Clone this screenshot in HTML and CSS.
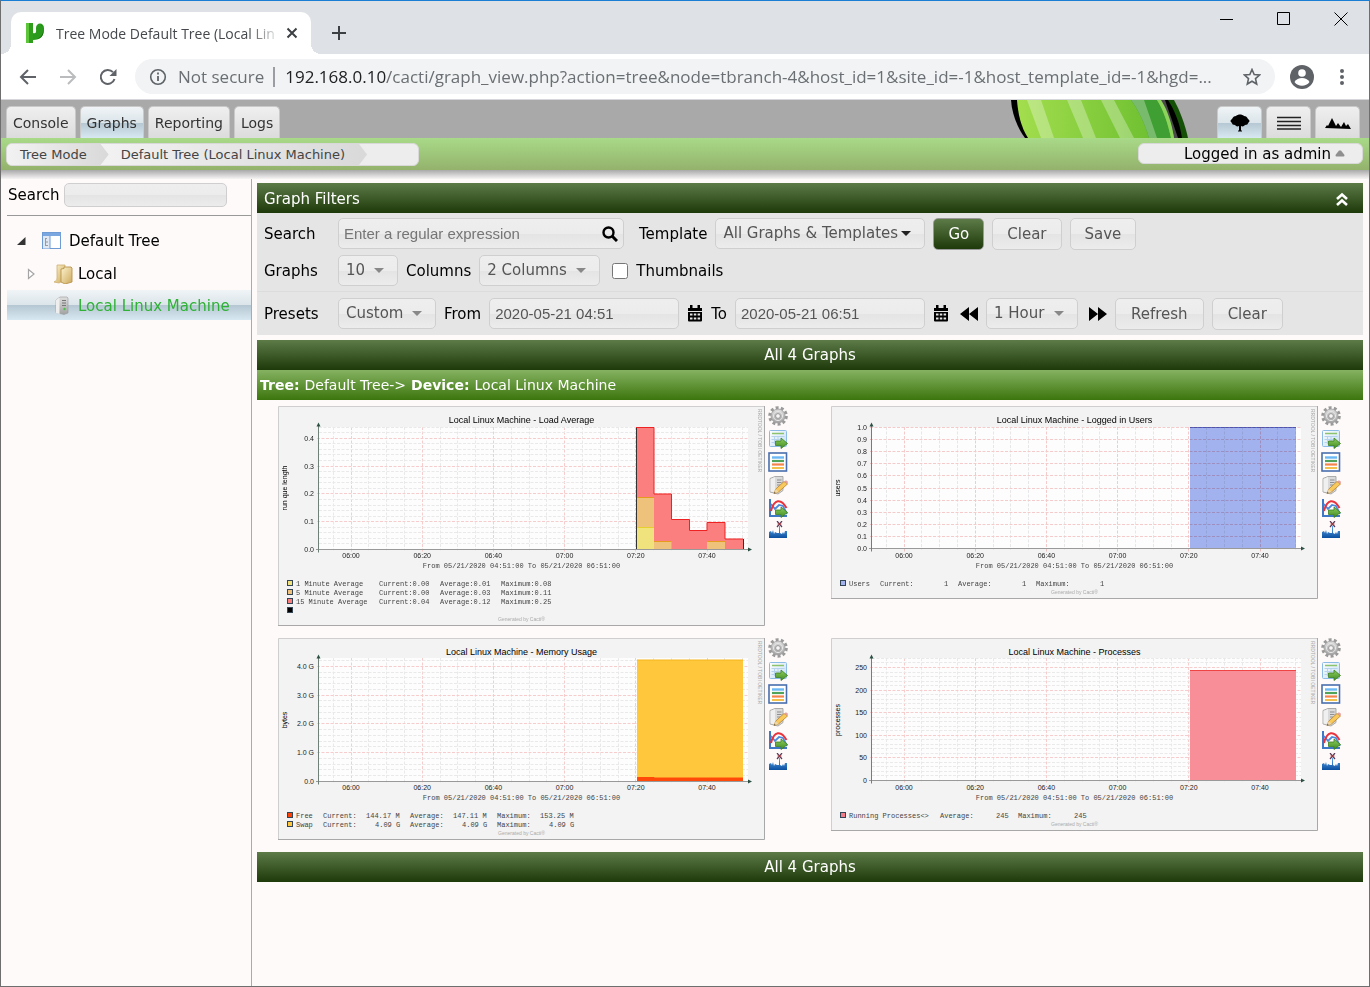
FILE: index.html
```html
<!DOCTYPE html>
<html lang="en">
<head>
  <meta charset="UTF-8" />
  <meta name="viewport" content="width=device-width, initial-scale=1" />
  <title>Tree Mode Default Tree (Local Linux Machine)</title>
  <link rel="stylesheet" href="styles.css">
</head>
<body>

  <!-- shared icons -->
  <svg class="defs" width="0" height="0" aria-hidden="true">
    <defs>
      <linearGradient id="metal" x1="0" y1="0" x2="0" y2="1">
        <stop offset="0" stop-color="#dedede"/><stop offset="1" stop-color="#a2a2a2"/>
      </linearGradient>
      <linearGradient id="leaf" x1="0" y1="0" x2="0" y2="1">
        <stop offset="0" stop-color="#8fcf5c"/><stop offset="1" stop-color="#3f8a24"/>
      </linearGradient>
      <linearGradient id="bluebar" x1="0" y1="0" x2="0" y2="1">
        <stop offset="0" stop-color="#5aa5e8"/><stop offset="1" stop-color="#0b4fa0"/>
      </linearGradient>
      <linearGradient id="cactusBody" x1="0" y1="0" x2="1" y2="0">
        <stop offset="0" stop-color="#a3de4e"/><stop offset="1" stop-color="#66bb2c"/>
      </linearGradient>
      <linearGradient id="folder" x1="0" y1="0" x2="1" y2="1">
        <stop offset="0" stop-color="#fdf3cf"/><stop offset="1" stop-color="#cda95b"/>
      </linearGradient>
      <linearGradient id="sheet" x1="0" y1="0" x2="1" y2="1">
        <stop offset="0" stop-color="#ffffff"/><stop offset="1" stop-color="#c3def5"/>
      </linearGradient>
    </defs>
    <symbol id="i-gear" viewBox="0 0 20 20">
      <circle cx="10" cy="10" r="8.200" fill="none" stroke="#9a9a9a" stroke-width="3.200" stroke-dasharray="2.900 2.252"/>
      <circle cx="10" cy="10" r="7" fill="url(#metal)" stroke="#9a9a9a" stroke-width=".8"/>
      <circle cx="10" cy="10" r="4.600" fill="none" stroke="#e6e6e6" stroke-width="1"/>
      <circle cx="10" cy="10" r="2.400" fill="#f7f5f5" stroke="#999" stroke-width="1"/>
    </symbol>
    <symbol id="i-csv" viewBox="0 0 20 20">
      <rect x="1.500" y="1.500" width="17" height="16" rx="1" fill="url(#sheet)" stroke="#8cbbe6"/>
      <path d="M4 4.500h12" stroke="#8cc36c" stroke-width="1.500"/>
      <path d="M3.500 7.500h13M3.500 10.500h10M3.500 13.500h5M6.500 7v8M10 7v8" stroke="#b5d3ec" stroke-width="1"/>
      <path d="M7.500 12h5.500V9l6.500 5.500-6.500 5v-3H7.500z" fill="url(#leaf)" stroke="#3a7d22" stroke-width=".8"/>
    </symbol>
    <symbol id="i-list" viewBox="0 0 20 20">
      <rect x="1" y="1" width="17.500" height="18" fill="#fff" stroke="#4a6fae" stroke-width="1.600"/>
      <path d="M4 5.500h12" stroke="#6cb8f5" stroke-width="2.400"/>
      <path d="M4 9h12" stroke="#52a35a" stroke-width="2.200"/>
      <path d="M4 12.500h12" stroke="#f5844c" stroke-width="2.200"/>
      <path d="M4 16h12" stroke="#f3c04b" stroke-width="2"/>
    </symbol>
    <symbol id="i-edit" viewBox="0 0 20 20">
      <path d="M2 3.500L7 1.500h8v14l-5 3.500-8-2z" fill="#dadada" stroke="#9b9b9b" stroke-width=".8"/>
      <path d="M2.500 4L7 2v15.500l-4.500-1z" fill="#f0f0f0"/>
      <path d="M9 5h4.500M9 7.500h4.500M9 10h3" stroke="#8e8e8e"/>
      <path d="M6 18.500l1.800-4.500L16 6.500l3.500 2.500-9 8z" fill="#f8c95c" stroke="#b9822b" stroke-width=".8"/>
      <path d="M16 6.500l3.500 2.500 .5-2.200-2-1.500z" fill="#e6a0a0"/>
      <path d="M6 18.500l1.800-4.500 2.700 3z" fill="#efd7ab"/>
      <path d="M6 18.500l.6-1.500 1 1z" fill="#333"/>
    </symbol>
    <symbol id="i-realtime" viewBox="0 0 20 20">
      <path d="M2 1v17h17" fill="none" stroke="#3f78c4" stroke-width="2"/>
      <path d="M3 6l4 5 4-4 4 1 4 8" fill="none" stroke="#4b8add" stroke-width="1.800"/>
      <path d="M3 13C6 1 13 0 18.500 10" fill="none" stroke="#e8323c" stroke-width="2"/>
      <path d="M7.500 12h5.500V9l6.500 5.500-6.500 5v-3H7.500z" fill="url(#leaf)" stroke="#3a7d22" stroke-width=".8"/>
    </symbol>
    <symbol id="i-spike" viewBox="0 0 20 20">
      <path d="M1 17v-6l2-1 1 2 1-3 1 4 1-2 2 1 2 0V5h1v7l2 1 1-2 1 2 1-3 2 0v7z" fill="url(#bluebar)"/>
      <path d="M9 0l5 6M14 0L9 6" stroke="#5b3a55" stroke-width="1.200"/>
      <path d="M9.500 3h4" stroke="#c23b3b"/>
    </symbol>
    <symbol id="i-calendar" viewBox="0 0 16 17">
      <path d="M1 3h14v3H1zM3 0h2.500v4H3zM10.500 0H13v4h-2.500z"/>
      <path d="M1 7v8.500q0 1 1 1h12q1 0 1-1V7zM3 8.500h2.500v2H3zM6.800 8.500h2.500v2H6.800zM10.600 8.500h2.500v2h-2.500zM3 12.500h2.500v2H3zM6.800 12.500h2.500v2H6.800zM10.600 12.500h2.500v2h-2.500z" fill-rule="evenodd"/>
    </symbol>
  </svg>

  <div class="window">

    <div class="tabstrip">
      <div class="browser-tab">
        <svg class="favicon" width="20" height="22" viewBox="0 0 20 22">
          <path d="M1 1h7v20H1z" fill="#2f9e1c"/>
          <path d="M1 1h3v20H1z" fill="#5cc53a"/>
          <path d="M8 11c4 1 3-2 3-5 0-6 8-6 8 0 0 8-3 12-11 12z" fill="#2a9a1c"/>
          <path d="M16 3c3 1 4 11-4 14 8-1 8-11 4-14z" fill="#14680c"/>
        </svg>
        <span class="browser-tab-title">Tree Mode Default Tree (Local Lin</span>
        <button class="chrome-btn" aria-label="Close tab">
          <svg width="12" height="12" viewBox="0 0 12 12"><path d="M1.500 1.500l9 9M10.500 1.500l-9 9" stroke="#3c4043" stroke-width="2"/></svg>
        </button>
      </div>
      <button class="chrome-btn new-tab" aria-label="New tab">
        <svg width="16" height="16" viewBox="0 0 16 16"><path d="M8 1v14M1 8h14" stroke="#3c4043" stroke-width="2"/></svg>
      </button>
      <div class="window-controls">
        <button class="chrome-btn" aria-label="Minimize"><svg width="14" height="14"><path d="M0 7.500h13" stroke="#000"/></svg></button>
        <button class="chrome-btn" aria-label="Maximize"><svg width="14" height="14"><path d="M.5 .5h12v12H.5z" fill="none" stroke="#000"/></svg></button>
        <button class="chrome-btn" aria-label="Close"><svg width="14" height="14"><path d="M.5 .5l13 13M13.500 .5l-13 13" stroke="#000"/></svg></button>
      </div>
    </div>

    <div class="toolbar">
      <button class="chrome-btn" aria-label="Back"><svg width="18" height="16" viewBox="0 0 18 16"><path d="M17 8H2M9 1L2 8l7 7" fill="none" stroke="#5f6368" stroke-width="2"/></svg></button>
      <button class="chrome-btn" aria-label="Forward"><svg width="18" height="16" viewBox="0 0 18 16"><path d="M1 8h15M9 1l7 7-7 7" fill="none" stroke="#babcbe" stroke-width="2"/></svg></button>
      <button class="chrome-btn" aria-label="Reload"><svg width="18" height="18" viewBox="0 0 18 18"><path d="M15.500 11A7 7 0 1 1 14 4.200" fill="none" stroke="#5f6368" stroke-width="2"/><path d="M17.500 1v7h-7z" fill="#5f6368"/></svg></button>
      <div class="address">
        <svg width="18" height="18" viewBox="0 0 18 18"><circle cx="9" cy="9" r="7.300" fill="none" stroke="#5f6368" stroke-width="1.600"/><path d="M9 8v5M9 4.500v2" stroke="#5f6368" stroke-width="1.800"/></svg>
        <span class="address-note">Not secure</span>
        <span class="address-url"><b>192.168.0.10</b>/cacti/graph_view.php?action=tree&amp;node=tbranch-4&amp;host_id=1&amp;site_id=-1&amp;host_template_id=-1&amp;hgd=...</span>
        <button class="chrome-btn" aria-label="Bookmark"><svg width="18" height="18" viewBox="0 0 18 18"><path d="M9 1.500l2.200 5 5.300.5-4 3.600 1.200 5.400L9 13.200 4.300 16l1.200-5.400-4-3.600 5.300-.5z" fill="none" stroke="#5f6368" stroke-width="1.600"/></svg></button>
      </div>
      <button class="chrome-btn profile" aria-label="Profile"><svg width="24" height="24" viewBox="0 0 24 24"><circle cx="12" cy="12" r="12" fill="#5f6368"/><circle cx="12" cy="8" r="3.800" fill="#fff"/><path d="M4.500 17c3-5.500 12-5.500 15 0-3.500 5-11.500 5-15 0z" fill="#fff"/></svg></button>
      <button class="chrome-btn" aria-label="Menu"><svg width="4" height="18" viewBox="0 0 4 18"><circle cx="2" cy="3" r="2" fill="#5f6368"/><circle cx="2" cy="9" r="2" fill="#5f6368"/><circle cx="2" cy="15" r="2" fill="#5f6368"/></svg></button>
    </div>

    <header class="header">
      <nav class="tabs">
        <a class="tab" href="#">Console</a>
        <a class="tab selected" href="#">Graphs</a>
        <a class="tab" href="#">Reporting</a>
        <a class="tab" href="#">Logs</a>
      </nav>
      <svg class="cactus" width="178" height="38" viewBox="0 0 178 38">
        <path d="M155 0h9c6 11 11 24 14 38h-14z" fill="#155007"/>
        <path d="M1 0h157c7 11 12 24 14 38H15C7 27 2 14 1 0z" fill="#000"/>
        <path d="M150 0h5l13 38h-6z" fill="#4a4a4a"/>
        <path d="M7 0h142c8 11 12 24 15 38H18C11 27 8 14 7 0z" fill="url(#cactusBody)"/>
        <path d="M17 0h14l13 38H31zM57 0h14l15 38H73zM91 0h13l20 38h-14z" fill="#fff" opacity=".3"/>
        <path d="M121 0h26c7 11 11 24 14 38h-22c-4-14-10-27-18-38z" fill="#3f9f33"/>
        <path d="M121 0h13l13 38h-8c-4-14-10-27-18-38z" fill="#79bb6c"/>
        <path d="M147 0h4c7 11 11 24 13 38h-3c-3-14-7-27-14-38z" fill="#8cd45c"/>
      </svg>
      <nav class="tabs">
        <a class="tab tab-icon selected" href="#" aria-label="Tree view">
          <svg width="20" height="20" viewBox="0 0 20 20"><path d="M9 18v-5c-2 1-3 0-4-1-2 0-3-1-3-2-2-1-2-3 0-4 1-2 2-3 4-3 2-2 6-2 8 0 2 0 3 1 4 3 2 1 2 3 0 4 0 1-1 2-3 2-1 1-2 2-4 1v5z"/><path d="M8 18h4" stroke="#000"/></svg>
        </a>
        <a class="tab tab-icon" href="#" aria-label="List view">
          <svg width="24" height="14" viewBox="0 0 24 14"><path d="M0 1.500h24M0 5.500h24M0 9.500h24M0 13h24" stroke="#222" stroke-width="1.500"/></svg>
        </a>
        <a class="tab tab-icon" href="#" aria-label="Preview">
          <svg width="26" height="12" viewBox="0 0 26 12"><path d="M0 11l2-3 1 1 4-8 4 8 2-3 3 4 3-5 2 4 2-2 3 5z"/></svg>
        </a>
      </nav>
    </header>

    <div class="crumbbar">
      <ul class="crumbs">
        <li><a href="#">Tree Mode</a></li>
        <li><a href="#">Default Tree (Local Linux Machine)</a></li>
      </ul>
      <button class="user">Logged in as admin <svg width="10" height="7" viewBox="0 0 10 7"><path d="M4 .5h2L9.500 5q0 1.500-1 1.500h-7Q.5 6.500.5 5z" fill="#8f8f8f"/></svg></button>
    </div>

    <div class="page">
      <aside class="sidebar">
        <form class="tree-search">
          <label for="treeSearch">Search</label>
          <input class="field" type="text" id="treeSearch">
        </form>
        <ul class="tree">
          <li class="tree-row">
            <svg class="twisty" width="9" height="9" viewBox="0 0 9 9"><path d="M8.500 0v8H0z" fill="#333"/></svg>
            <svg width="20" height="18" viewBox="0 0 20 18"><rect x=".5" y=".5" width="18" height="16" fill="#fff" stroke="#6f9bd4"/><path d="M1 1h17.500v3H1z" fill="#7ba7e0"/><path d="M1 4h7v12.500H1z" fill="#dfe8f4"/><path d="M8 4v12.500" stroke="#6f9bd4"/><path d="M3.500 6v8M3 6.500h2M4 10h2M3 13.500h3" stroke="#9a9a9a"/></svg>
            <a href="#">Default Tree</a>
          </li>
          <li class="tree-row child">
            <svg class="twisty" width="8" height="12" viewBox="0 0 8 12"><path d="M1 1.500v9L6.500 6z" fill="#fff" stroke="#a5a5a5" stroke-width="1.200"/></svg>
            <svg width="20" height="20" viewBox="0 0 20 20"><path d="M4 1h8v15l-6 3-5-1c2-1 3-2 3-4z" fill="url(#folder)" stroke="#cdb071" stroke-width=".8"/><path d="M8 5l3-.5V3h7l1 1v14l-7 2-4-2z" fill="url(#folder)" stroke="#b8934a" stroke-width=".9"/></svg>
            <a href="#">Local</a>
          </li>
          <li class="tree-row child selected">
            <span class="twisty"></span>
            <svg width="20" height="20" viewBox="0 0 20 20"><path d="M3 4l4-3h7l1 1v15l-4 1.500-8-2z" fill="url(#metal)" stroke="#999" stroke-width=".6"/><path d="M3 4l3.500-2.500V18L3 17z" fill="#eee"/><path d="M9 4.500h4M9 7h4M9 9.500h4" stroke="#777"/><circle cx="11.500" cy="13" r="1.200" fill="#4fc04f"/></svg>
            <a href="#">Local Linux Machine</a>
          </li>
        </ul>
      </aside>

      <main class="content">
        <section class="filters">
          <h2 class="bar bar-left">
            Graph Filters
            <svg width="14" height="16" viewBox="0 0 14 16"><path d="M2 8l5-4.500L12 8M2 14l5-4.500 5 4.500" fill="none" stroke="#fff" stroke-width="2.600"/></svg>
          </h2>
          <form class="filter-body">
            <div class="filter-row">
              <label class="filter-name" for="rfilter">Search</label>
              <div class="search-box">
                <input class="field" type="text" id="rfilter" placeholder="Enter a regular expression">
                <svg class="search-icon" width="16" height="16" viewBox="0 0 16 16"><circle cx="6.500" cy="6.500" r="5" fill="none" stroke="#000" stroke-width="2.400"/><path d="M10 10l5 5" stroke="#000" stroke-width="3"/></svg>
              </div>
              <label class="gap-left" for="template">Template</label>
              <span class="select dark"><select class="field w-template" id="template"><option>All Graphs &amp; Templates</option></select></span>
              <button class="btn btn-go" type="button">Go</button>
              <button class="btn" type="button">Clear</button>
              <button class="btn" type="button">Save</button>
            </div>
            <div class="filter-row">
              <label class="filter-name" for="graphs">Graphs</label>
              <span class="select"><select class="field w-count" id="graphs"><option>10</option></select></span>
              <label for="columns">Columns</label>
              <span class="select"><select class="field w-columns" id="columns"><option>2 Columns</option></select></span>
              <input class="check" type="checkbox" id="thumbnails">
              <label for="thumbnails">Thumbnails</label>
            </div>
            <div class="filter-row timespan">
              <label class="filter-name" for="presets">Presets</label>
              <span class="select"><select class="field w-preset" id="presets"><option>Custom</option></select></span>
              <label for="date1">From</label>
              <input class="field w-date" type="text" id="date1" value="2020-05-21 04:51">
              <button class="icon-btn" type="button" aria-label="Start date"><svg width="16" height="17"><use href="#i-calendar"/></svg></button>
              <label for="date2">To</label>
              <input class="field w-date" type="text" id="date2" value="2020-05-21 06:51">
              <button class="icon-btn" type="button" aria-label="End date"><svg width="16" height="17"><use href="#i-calendar"/></svg></button>
              <button class="icon-btn shift-left" type="button" aria-label="Shift back"><svg width="18" height="14" viewBox="0 0 18 14"><path d="M9 0v14L0 7zM18 0v14L9 7z"/></svg></button>
              <span class="select"><select class="field w-shift" aria-label="Time shift"><option>1 Hour</option></select></span>
              <button class="icon-btn shift-right" type="button" aria-label="Shift forward"><svg width="18" height="14" viewBox="0 0 18 14"><path d="M0 0v14l9-7zM9 0v14l9-7z"/></svg></button>
              <button class="btn" type="button">Refresh</button>
              <button class="btn" type="button">Clear</button>
            </div>
          </form>
        </section>

        <div class="bar">All 4 Graphs</div>
        <div class="bar bar-sub"><b>Tree:</b> Default Tree-&gt; <b>Device:</b> Local Linux Machine</div>
        <div class="graphs" id="graphList"></div>
        <div class="bar">All 4 Graphs</div>
      </main>
    </div>
  </div>

  <script src="graphs.js"></script>
</body>
</html>
```

FILE: styles.css
```css
* {
  box-sizing: border-box;
}
body {
  margin: 0;
  font-family: Verdana, "DejaVu Sans", sans-serif;
  font-size: 15px;
  color: #000;
  background: #fffafa;
}
a {
  color: inherit;
  text-decoration: none;
}
ul {
  list-style: none;
  margin: 0;
  padding: 0;
}
button {
  font: inherit;
  cursor: pointer;
}
svg {
  display: block;
  flex: none;
}
.defs {
  position: absolute;
}
.window {
  display: flex;
  flex-direction: column;
  min-height: 100vh;
  border: 1px solid #6e6e6e;
  border-top-color: #1a7fd4;
}

/* browser frame */
.chrome-btn,
.icon-btn {
  display: flex;
  padding: 0;
  border: 0;
  background: none;
}
.tabstrip {
  display: flex;
  align-items: center;
  height: 53px;
  padding: 11px 21px 0 10px;
  background: #dee1e6;
  font-family: "Segoe UI", "Open Sans", sans-serif;
}
.browser-tab {
  position: relative;
  display: flex;
  align-items: center;
  gap: 11px;
  width: 300px;
  height: 42px;
  padding: 0 14px;
  border-radius: 10px 10px 0 0;
  background: #fff;
}
.browser-tab::before,
.browser-tab::after {
  content: "";
  position: absolute;
  bottom: 0;
  width: 10px;
  height: 10px;
}
.browser-tab::before {
  left: -10px;
  background: radial-gradient(circle at 0 0, transparent 10px, #fff 10px);
}
.browser-tab::after {
  right: -10px;
  background: radial-gradient(circle at 100% 0, transparent 10px, #fff 10px);
}
.browser-tab-title {
  flex: 1;
  white-space: nowrap;
  font-size: 14px;
  color: #45494d;
  -webkit-mask-image: linear-gradient(to right, #000 88%, rgba(0,0,0,0.2));
  mask-image: linear-gradient(to right, #000 88%, rgba(0,0,0,0.2));
}
.new-tab {
  margin-left: 20px;
}
.window-controls {
  display: flex;
  gap: 43px;
  align-self: flex-start;
  margin-left: auto;
}
.toolbar {
  display: flex;
  align-items: center;
  gap: 22px;
  height: 46px;
  padding: 0 25px 0 18px;
  border-bottom: 1px solid #d5d7da;
  background: #fff;
  font-family: "Segoe UI", "Open Sans", sans-serif;
}
.address {
  display: flex;
  flex: 1;
  align-items: center;
  min-width: 0;
  height: 35px;
  margin-right: -7px;
  margin-left: -4px;
  padding: 0 14px;
  border-radius: 18px;
  background: #f1f3f4;
  font-size: 17px;
  color: #6b6f73;
}
.address-note {
  margin: 0 10px 0 11px;
  padding-right: 9px;
  border-right: 2px solid #9a9da1;
  line-height: 20px;
  white-space: nowrap;
}
.address-url {
  flex: 1;
  overflow: hidden;
  white-space: nowrap;
}
.address-url b {
  font-weight: normal;
  color: #202124;
}
.profile {
  margin-right: 4px;
}

/* cacti header */
.header {
  display: flex;
  align-items: flex-end;
  height: 38px;
  padding: 0 9px 0 5px;
  background: #a9a9a9;
}
.tabs {
  display: flex;
  gap: 4px;
}
.tab {
  display: flex;
  align-items: center;
  height: 32px;
  padding: 0 6px;
  border: 1px solid #c9c9c9;
  border-bottom: 0;
  border-radius: 5px 5px 0 0;
  background: linear-gradient(#efefef, #dcdcdc);
  font-size: 14px;
  color: #333;
}
.tab.selected {
  background: linear-gradient(#f0f4f7, #dbe5ea 50%, #b5c7d2 51%, #d8e8f2);
}
.tab-icon {
  justify-content: center;
  width: 45px;
}
.cactus {
  margin-right: 29px;
  margin-left: auto;
}
.crumbbar {
  display: flex;
  align-items: flex-start;
  justify-content: space-between;
  height: 41px;
  padding: 5px 6px 0 5px;
  background: linear-gradient(#a8da88, #94b26c 32px, #a9a9a9 32px, #f7f4f4);
}
.crumbs {
  display: flex;
  width: 413px;
  height: 23px;
  overflow: hidden;
  border: 1px solid #d8d8d8;
  border-radius: 6px;
  background: #ededed;
  font-size: 13px;
  line-height: 21px;
  color: #444;
}
.crumbs li {
  padding: 0 22px 0 13px;
  background: linear-gradient(to right, #f2f2f2, #d9d9d9);
  clip-path: polygon(0 0, calc(100% - 8px) 0, 100% 50%, calc(100% - 8px) 100%, 0 100%);
  white-space: nowrap;
}
.crumbs li:first-child {
  position: relative;
  z-index: 1;
}
.crumbs li + li {
  margin-left: -8px;
  padding-left: 20px;
}
.user {
  display: flex;
  align-items: center;
  justify-content: flex-end;
  gap: 4px;
  width: 225px;
  height: 21px;
  padding: 0 17px 0 0;
  border: 1px solid #d8d8d8;
  border-radius: 6px;
  background: #ededed;
  color: #000;
}

/* page body */
.page {
  display: flex;
  flex: 1;
}
.sidebar {
  width: 251px;
  padding-left: 6px;
  border-right: 1px solid #aaa;
}
.tree-search {
  display: flex;
  align-items: center;
  gap: 4px;
  height: 37px;
  padding: 0 0 5px 1px;
  border-bottom: 1px solid #999;
}
.tree-search .field {
  width: 163px;
  height: 24px;
}
.tree {
  display: flex;
  flex-direction: column;
  gap: 2px;
  padding-top: 10px;
}
.tree-row {
  display: flex;
  align-items: center;
  height: 30px;
  padding-left: 10px;
}
.tree-row.child {
  padding-top: 2px;
  padding-left: 20px;
}
.twisty {
  width: 9px;
  margin-right: 16px;
}
.tree-row a {
  margin-left: 7px;
}
.child .twisty {
  margin-right: 17px;
}
.child a {
  margin-left: 5px;
}
.tree-row.selected {
  background: linear-gradient(#f0f4f7, #dbe5ea 50%, #b5c7d2 51%, #d8e8f2);
  color: #2eb135;
}
.content {
  flex: 1;
  min-width: 0;
  padding: 4px 6px 0 5px;
}
.bar {
  display: flex;
  align-items: center;
  justify-content: center;
  height: 30px;
  margin: 0;
  background: linear-gradient(#5c7b47, #1e390a);
  font-size: 15px;
  font-weight: normal;
  color: #fff;
}
.bar-left {
  justify-content: space-between;
  padding: 2px 14px 0 7px;
}
.bar-sub {
  justify-content: flex-start;
  gap: 5px;
  padding-left: 3px;
  background: linear-gradient(#85b262, #3c750d);
  font-size: 14px;
}

/* filters */
.filters {
  margin-bottom: 5px;
}
.filter-body {
  background: #e5e5e5;
}
.filter-row {
  display: flex;
  align-items: center;
  gap: 8px;
  height: 33px;
  padding-left: 7px;
}
.timespan {
  height: 44px;
  margin-top: 4px;
  border-top: 1px solid #dcdcdc;
}
.filter-row:first-child {
  height: 41px;
}
.filter-name {
  width: 66px;
}
.field {
  height: 31px;
  padding: 0 5px;
  border: 1px solid #cfcfcf;
  border-radius: 5px;
  background: linear-gradient(#eee, #ececec 50%, #e4e4e4 51%, #ececec);
  font-family: Arial, "Liberation Sans", sans-serif;
  font-size: 15px;
  color: #555;
}
.field::placeholder {
  color: #757575;
}
.search-box {
  position: relative;
}
.search-box .field {
  display: block;
  width: 286px;
}
.search-icon {
  position: absolute;
  top: 8px;
  right: 6px;
}
.gap-left {
  margin-left: 7px;
}
.select {
  position: relative;
  color: #888;
}
.select.dark {
  color: #222;
}
.select::after {
  content: "";
  position: absolute;
  top: 13px;
  right: 14px;
  border: 5px solid transparent;
  border-top-color: currentColor;
  border-bottom: 0;
  pointer-events: none;
}
select.field {
  display: block;
  appearance: none;
  padding: 0 7px 2px;
  font-family: inherit;
}
.w-template { width: 210px; }
.w-count { width: 60px; }
.w-columns { width: 121px; }
.w-preset { width: 98px; }
.w-date { width: 190px; }
.w-shift { width: 92px; }
.check {
  width: 16px;
  height: 16px;
  margin: 0 0 0 4px;
}
.btn {
  height: 32px;
  padding: 0 15px;
  border: 1px solid #cfcfcf;
  border-radius: 5px;
  background: linear-gradient(#eee, #ececec 50%, #e4e4e4 51%, #ececec);
  color: #555;
}
.filter-row:first-child .btn {
  padding: 0 14px;
}
.filter-row .btn-go {
  border-color: #999;
  background: linear-gradient(#5c7b47, #1e390a);
  color: #fff;
}
.shift-left {
  margin-left: 3px;
}
.shift-right {
  margin-left: 3px;
}

/* graphs */
.graphs {
  display: grid;
  grid-template-columns: 1fr 1fr;
  margin-bottom: 6px;
}
.graph {
  display: flex;
  justify-content: center;
  align-items: flex-start;
  gap: 3px;
  padding: 6px 2px 6px 0;
}
.graph-tools {
  display: flex;
  flex-direction: column;
  gap: 3px;
}
.chart {
  font-family: Arial, "Liberation Sans", sans-serif;
  font-size: 7px;
}
.chart-title {
  font-size: 9px;
}
.chart-mono {
  font-family: "Courier New", "Liberation Mono", monospace;
  fill: #444;
  white-space: pre;
}
.chart-faint {
  font-size: 5px;
  fill: #aaa;
}
.grid-over {
  mix-blend-mode: multiply;
}
```

FILE: graphs.js
```js
const W = 487, LEFT = 41, RIGHT = 470;
const TICKS = ["06:00", "06:20", "06:40", "07:00", "07:20", "07:40"];
const TICK0 = 73, TICK_STEP = 71.2;

// y values are pixels inside the chart, steps are [left, right, top]
const graphs = [
  {
    title: "Local Linux Machine - Load Average", unit: "run que length", height: 220,
    top: 21, base: 143.5, step: 27.8, minor: 5, labels: ["0.0", "0.1", "0.2", "0.3", "0.4"],
    start: "#333",
    areas: [
      { fill: "#fb7f7f", line: "#ee2222", steps: [[358, 376, 21.5], [376, 393.5, 88], [393.5, 411.5, 113.5], [411.5, 429, 124.5], [429, 447, 116.5], [447, 465, 133]] },
      { fill: "#efc27b", line: "#e69b1f", steps: [[358, 376, 91.5]] },
      { fill: "#efc27b", line: "#e69b1f", steps: [[376, 393.5, 135.5]] },
      { fill: "#efc27b", line: "#e69b1f", steps: [[429, 447, 135.5]] },
      { fill: "#f0e27c", line: "#e6cf2f", steps: [[358, 376, 121.5]] }
    ],
    legend: [
      ["#f0e27c", [18, "1 Minute Average"], [101, "Current:0.00"], [162, "Average:0.01"], [223, "Maximum:0.08"]],
      ["#efc27b", [18, "5 Minute Average"], [101, "Current:0.00"], [162, "Average:0.03"], [223, "Maximum:0.11"]],
      ["#fb7f7f", [18, "15 Minute Average"], [101, "Current:0.04"], [162, "Average:0.12"], [223, "Maximum:0.25"]],
      ["#000"]
    ]
  },
  {
    title: "Local Linux Machine - Logged in Users", unit: "users", height: 193,
    top: 21, base: 142.5, step: 12.1, minor: 1, gridOver: true,
    labels: ["0.0", "0.1", "0.2", "0.3", "0.4", "0.5", "0.6", "0.7", "0.8", "0.9", "1.0"],
    areas: [{ fill: "#a2b2ee", line: "#5566cc", steps: [[359, 465, 21.5]] }],
    legend: [["#a2b2ee", [18, "Users"], [49, "Current:"], [113, "1"], [127, "Average:"], [191, "1"], [205, "Maximum:"], [269, "1"]]]
  },
  {
    title: "Local Linux Machine - Memory Usage", unit: "bytes", height: 202,
    top: 20, base: 143.5, step: 28.8, minor: 5, labels: ["0.0", "1.0 G", "2.0 G", "3.0 G", "4.0 G"],
    areas: [
      { fill: "#ffc73b", line: "#f5b51c", steps: [[359, 465, 22]] },
      { fill: "#ff4a0a", line: "#ff4a0a", steps: [[359, 376, 139.5], [376, 465, 140]] }
    ],
    legend: [
      ["#ff4105", [18, "Free"], [45, "Current:"], [88, "144.17 M"], [132, "Average:"], [175, "147.11 M"], [219, "Maximum:"], [262, "153.25 M"]],
      ["#ffc73b", [18, "Swap"], [45, "Current:"], [97, "4.09 G"], [132, "Average:"], [184, "4.09 G"], [219, "Maximum:"], [271, "4.09 G"]]
    ]
  },
  {
    title: "Local Linux Machine - Processes", unit: "processes", height: 193,
    top: 20, base: 142.5, step: 22.6, minor: 5, labels: ["0", "50", "100", "150", "200", "250"],
    areas: [{ fill: "#f88e98", line: "#ee4444", steps: [[359, 465, 32.5]] }],
    legend: [["#f07c88", [18, "Running Processes<>"], [109, "Average:"], [165, "245"], [187, "Maximum:"], [243, "245"]]]
  }
];

const tools = [
  ["gear", "Graph details"], ["csv", "Export CSV"], ["list", "Time graph view"],
  ["edit", "Edit device"], ["realtime", "Realtime"], ["spike", "Kill spikes"]
];

function escapeText(s) {
  return s.replace(/</g, "&lt;").replace(/>/g, "&gt;");
}

function line(x1, y1, x2, y2, color, dash) {
  return `<line x1="${x1}" y1="${y1}" x2="${x2}" y2="${y2}" stroke="${color}"${dash ? ' stroke-dasharray="3 1.5"' : ""}/>`;
}

function drawGrid(g) {
  let out = "";
  for (let i = -2; i < 23; i++) {
    const x = Math.floor(TICK0 + i * TICK_STEP / 4) + 0.5;
    if (x < LEFT || x > RIGHT) continue;
    out += line(x, g.top, x, g.base + (i % 4 ? 1 : 3), i % 4 ? "#e9e9e9" : "#f7cccc", true);
  }
  for (let i = 1; g.base - i * g.step / g.minor >= g.top; i++) {
    const y = Math.floor(g.base - i * g.step / g.minor) + 0.5;
    out += line(LEFT - (i % g.minor ? 0 : 2), y, RIGHT, y, i % g.minor ? "#e9e9e9" : "#f7cccc", true);
  }
  return out;
}

function drawAreas(g) {
  return g.areas.map(a => {
    const first = a.steps[0], last = a.steps[a.steps.length - 1];
    const top = a.steps.map(([l, r, y]) => `L${l} ${y}L${r} ${y}`).join("").slice(1);
    return `<path d="M${first[0]} ${g.base}L${top}L${last[1]} ${g.base}z" fill="${a.fill}"/>` +
      `<path d="M${top}" fill="none" stroke="${a.line}"/>`;
  }).join("");
}

function drawLegend(g) {
  return g.legend.map(([color, ...parts], i) => {
    const y = 180 + i * 9;
    return `<rect x="9.5" y="${y - 5.5}" width="5" height="5" fill="${color}" stroke="#345"/>` +
      parts.map(([x, t]) => `<text class="chart-mono" x="${x}" y="${y}">${escapeText(t)}</text>`).join("");
  }).join("");
}

function drawChart(g) {
  const h = g.height;
  let out = `<svg class="chart" width="${W}" height="${h}" viewBox="0 0 ${W} ${h}" role="img" aria-label="${g.title}">`;
  out += `<rect width="${W}" height="${h}" fill="#f3f3f3"/>`;
  out += `<path d="M.5 ${h}V.5H${W}" fill="none" stroke="#cfcfcf"/><path d="M0 ${h - 0.5}H${W - 0.5}V0" fill="none" stroke="#a8a8a8"/>`;
  out += `<rect x="${LEFT}" y="${g.top}" width="${RIGHT - LEFT}" height="${g.base - g.top}" fill="#fdfdfd"/>`;
  out += g.gridOver
    ? drawAreas(g) + `<g class="grid-over">${drawGrid(g)}</g>`
    : drawGrid(g) + drawAreas(g);
  if (g.start) out += line(358.5, 22, 358.5, g.base, g.start) + line(465.5, 133, 465.5, g.base, g.start);
  out += line(LEFT - 3, g.base, RIGHT + 2, g.base, "#999") + line(40.5, 18, 40.5, g.base + 3, "#6f8078");
  out += `<path d="M38.500 20.500l2-4 2 4zM470 ${g.base - 2}l4 2-4 2z" fill="#2b5042"/>`;
  out += g.labels.map((t, i) =>
    `<text x="36" y="${g.base - i * g.step + 2.5}" text-anchor="end" fill="#222">${t}</text>`).join("");
  out += TICKS.map((t, i) => `<text x="${TICK0 + i * TICK_STEP}" y="152" text-anchor="middle" fill="#222">${t}</text>`).join("");
  out += `<text class="chart-title" x="${W / 2}" y="17" text-anchor="middle">${g.title}</text>`;
  out += `<text transform="translate(9 82) rotate(-90)" text-anchor="middle">${g.unit}</text>`;
  out += `<text class="chart-mono" x="${W / 2}" y="162" text-anchor="middle">From 05/21/2020 04:51:00 To 05/21/2020 06:51:00</text>`;
  out += drawLegend(g);
  out += `<text class="chart-faint" x="${W / 2}" y="${h - 5}" text-anchor="middle">Generated by Cacti®</text>`;
  out += `<text class="chart-faint" transform="translate(480 3) rotate(90)">RRDTOOL / TOBI OETIKER</text>`;
  return out + "</svg>";
}

document.getElementById("graphList").innerHTML = graphs.map(g => `
  <div class="graph">
    ${drawChart(g)}
    <div class="graph-tools">
      ${tools.map(([id, label]) => `<button class="icon-btn" aria-label="${label}"><svg width="20" height="20"><use href="#i-${id}"/></svg></button>`).join("")}
    </div>
  </div>`).join("");
```
